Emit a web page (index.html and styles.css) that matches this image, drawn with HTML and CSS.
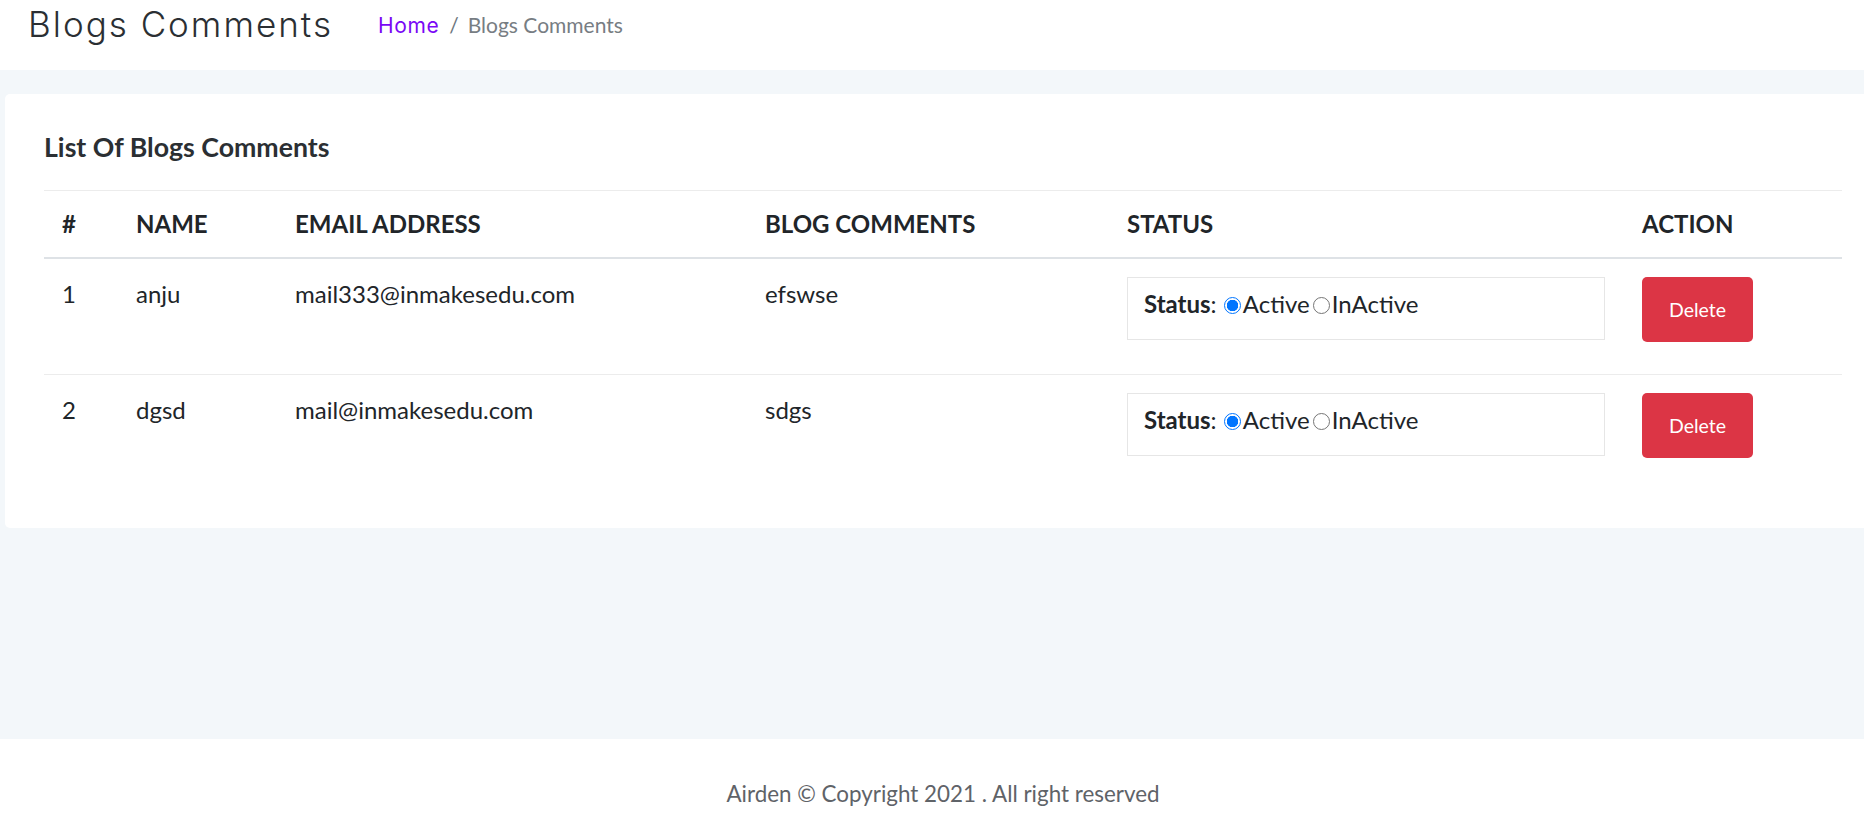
FILE: index.html
```html
<!DOCTYPE html>
<html lang="en">
<head>
<meta charset="utf-8">
<title>Blogs Comments</title>
<link rel="stylesheet" href="styles.css">
</head>
<body>
<div class="page">
  <header class="topbar">
    <h1 class="page-title">Blogs Comments</h1>
    <nav class="breadcrumb">
      <a class="crumb-link" href="#">Home</a>
      <span class="crumb-sep">/</span>
      <span class="crumb-current">Blogs Comments</span>
    </nav>
  </header>

  <main class="content">
    <section class="card">
      <h2 class="card-title">List Of Blogs Comments</h2>
      <table class="data-table">
        <colgroup>
          <col class="c-num"><col class="c-name"><col class="c-email"><col class="c-comment"><col class="c-status"><col class="c-action">
        </colgroup>
        <thead>
          <tr>
            <th>#</th><th>NAME</th><th>EMAIL ADDRESS</th><th>BLOG COMMENTS</th><th>STATUS</th><th>ACTION</th>
          </tr>
        </thead>
        <tbody>
          <tr>
            <td>1</td><td>anju</td><td>mail333@inmakesedu.com</td><td>efswse</td>
            <td>
              <div class="status-box">
                <b>Status</b>: <input class="radio" type="radio" name="s1" checked><span>Active</span><input class="radio" type="radio" name="s1"><span>InActive</span>
              </div>
            </td>
            <td><button class="btn-delete" type="button">Delete</button></td>
          </tr>
          <tr>
            <td>2</td><td>dgsd</td><td>mail@inmakesedu.com</td><td>sdgs</td>
            <td>
              <div class="status-box">
                <b>Status</b>: <input class="radio" type="radio" name="s2" checked><span>Active</span><input class="radio" type="radio" name="s2"><span>InActive</span>
              </div>
            </td>
            <td><button class="btn-delete" type="button">Delete</button></td>
          </tr>
        </tbody>
      </table>
    </section>
  </main>

  <footer class="footer">
    <p class="copyright">Airden © Copyright 2021 . All right reserved</p>
  </footer>
</div>
</body>
</html>
```

FILE: styles.css
```css
* { box-sizing: border-box; }

html, body {
  margin: 0;
  padding: 0;
}

body {
  font-family: Lato, "Liberation Sans", sans-serif;
  color: #212529;
  background: #fff;
}

.page {
  overflow-x: hidden;
}

.topbar {
  height: 70px;
  display: flex;
  align-items: flex-start;
  padding-left: 28px;
  background: #fff;
}

.page-title {
  margin: 0;
  padding-top: 3px;
  font-family: Inter, "Open Sans", sans-serif;
  font-weight: 300;
  font-size: 35px;
  line-height: 42px;
  color: #2b2f33;
  letter-spacing: 2px;
}

.breadcrumb {
  display: flex;
  align-items: baseline;
  margin-left: 45px;
  padding-top: 9px;
  font-size: 21px;
  line-height: 32px;
}

.crumb-link {
  font-family: Inter, "Open Sans", sans-serif;
  font-weight: 400;
  font-size: 21px;
  letter-spacing: 0.6px;
  color: #7a08f5;
  text-decoration: none;
}

.crumb-sep {
  margin: 0 9px 0 10px;
  color: #6c757d;
}

.crumb-current {
  color: #777d83;
}

.content {
  background: #f3f7fa;
  padding: 24px 0 211px 5px;
}

.card {
  background: #fff;
  border-radius: 5px;
  margin-right: -40px;
  padding: 38px 62px 38px 39px;
}

.card-title {
  margin: 0 0 28px;
  font-size: 26.7px;
  font-weight: 700;
  line-height: 30px;
  color: #2b2f33;
}

.data-table {
  width: 1798px;
  border-collapse: collapse;
  table-layout: fixed;
}

.c-num { width: 74px; }
.c-name { width: 159px; }
.c-email { width: 470px; }
.c-comment { width: 361px; }
.c-status { width: 515px; }
.c-action { width: 219px; }

.data-table th {
  text-align: left;
  font-size: 24px;
  font-weight: 700;
  line-height: 34px;
  padding: 16px 18px;
  border-top: 1px solid #ececec;
  border-bottom: 2px solid #dee2e6;
  color: #212529;
}

.data-table td {
  vertical-align: top;
  font-size: 24px;
  line-height: 33px;
  padding: 18px 18px;
  color: #212529;
}

.data-table th:nth-child(5),
.data-table th:nth-child(6),
.data-table td:nth-child(5),
.data-table td:nth-child(6) {
  padding-left: 19px;
}

.data-table tbody tr + tr td {
  border-top: 1px solid #ececec;
}

.status-box {
  border: 1px solid #e6e6e6;
  padding: 9px 16px 19px;
  margin-bottom: 16px;
  font-size: 24px;
  line-height: 33px;
  white-space: nowrap;
}

.status-box b {
  font-weight: 700;
}

.radio {
  -webkit-appearance: none;
  appearance: none;
  width: 17px;
  height: 17px;
  margin: 0 2px 0 1px;
  border: 1px solid #767676;
  border-radius: 50%;
  background: #fff;
  vertical-align: -1px;
}

.radio:checked {
  border: 1.5px solid #0075ff;
  background: radial-gradient(circle, #0075ff 0 5.5px, #fff 6px);
}

.radio + span + .radio {
  margin-left: 3px;
}

.btn-delete {
  display: block;
  border: 0;
  border-radius: 5px;
  background: #dc3545;
  color: #fff;
  font-family: Lato, "Liberation Sans", sans-serif;
  font-size: 19.5px;
  line-height: 29px;
  padding: 18px 27px;
}

.footer {
  background: #fff;
  padding: 38px 0 40px 22px;
  text-align: center;
}

.copyright {
  margin: 0;
  font-size: 22.4px;
  line-height: 33px;
  color: #5f6368;
}
```
